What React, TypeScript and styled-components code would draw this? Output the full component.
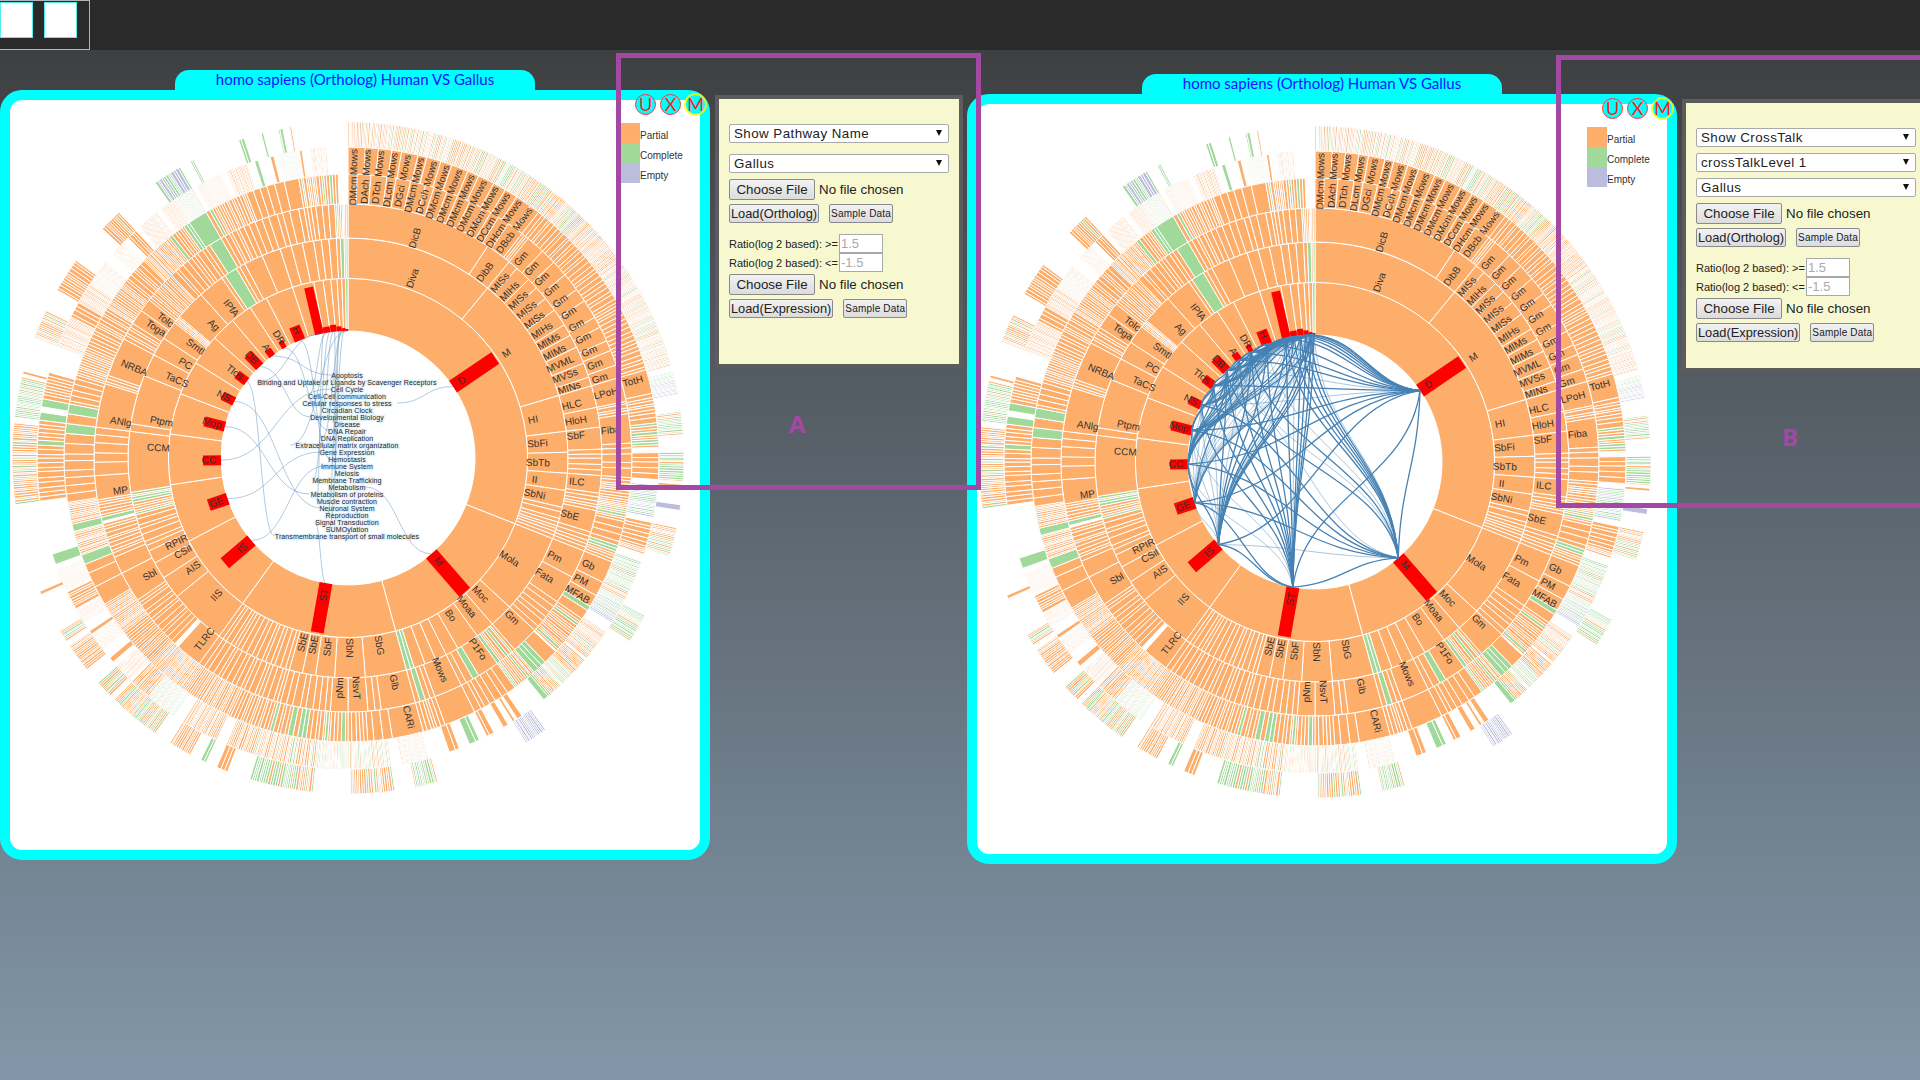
import styled, { createGlobalStyle } from "styled-components";

// ---------- sunburst data ----------
const ORANGE = "#fdae6b";
const GREEN = "#a1d99b";
const PURPLE = "#bcbddc";

const R = 127;
const ringR = (level: number) => R * Math.sqrt(level);

type Zone = [number, number, number, string?];

// seeded random so both charts and every render are the same
let seed = 20240;
function rnd() {
  seed = (seed * 16807) % 2147483647;
  return seed / 2147483647;
}

function polar(r: number, deg: number): [number, number] {
  const a = (deg * Math.PI) / 180;
  return [r * Math.sin(a), -r * Math.cos(a)];
}

function arcPath(r0: number, r1: number, a0: number, a1: number) {
  const [x0, y0] = polar(r1, a0);
  const [x1, y1] = polar(r1, a1);
  const [x2, y2] = polar(r0, a1);
  const [x3, y3] = polar(r0, a0);
  const big = a1 - a0 > 180 ? 1 : 0;
  return `M${x0.toFixed(2)} ${y0.toFixed(2)}A${r1.toFixed(1)} ${r1.toFixed(1)} 0 ${big} 1 ${x1.toFixed(2)} ${y1.toFixed(2)}L${x2.toFixed(2)} ${y2.toFixed(2)}A${r0.toFixed(1)} ${r0.toFixed(1)} 0 ${big} 0 ${x3.toFixed(2)} ${y3.toFixed(2)}Z`;
}

function pick(mix: string) {
  const v = rnd();
  if (mix === "o") return ORANGE;
  if (mix === "g") return GREEN;
  if (mix === "p") return PURPLE;
  if (mix === "og") return v < 0.72 ? ORANGE : GREEN;
  if (mix === "go") return v < 0.7 ? GREEN : ORANGE;
  if (mix === "pg") return v < 0.5 ? PURPLE : GREEN;
  return v < 0.6 ? ORANGE : v < 0.92 ? GREEN : PURPLE;
}

const rings: Zone[][] = [
  // ring 1 (127 - 180)
  [
    [0, 111.5, 1], [111.5, 164.6, 1], [164.6, 215.9, 1], [215.9, 242.4, 1], [242.4, 261.4, 1],
    [261.4, 277.7, 1], [277.7, 291, 1], [291, 302, 1], [302, 312, 1], [312, 320, 1], [320, 327, 1],
    [327, 333, 1], [333, 342, 1], [342, 349, 1], [349, 352, 1], [352, 354.5, 1], [354.5, 356.5, 1],
    [356.5, 358, 1], [358, 359.2, 1], [359.2, 360, 1, "g"],
  ],
  // ring 2 (180 - 220)
  [
    [0, 39.4, 1], [39.4, 73.5, 1], [73.5, 83, 1], [83, 88.5, 1], [88.5, 94, 1], [94, 98.5, 1], [98.5, 103, 1], [103, 107, 3], [107, 111.5, 5],
    [111.5, 132.7, 1], [132.7, 139, 1], [139, 144, 1], [144, 150, 1], [150, 153.5, 1], [153.5, 156.5, 1],
    [156.5, 159.5, 1], [159.5, 162.5, 1], [162.5, 164.6, 2, "g"],
    [164.6, 175.5, 1], [175.5, 183.5, 1], [183.5, 188.5, 1], [188.5, 192, 1], [192, 195.5, 1], [195.5, 215.9, 16],
    [215.9, 231, 1], [231, 237, 1], [237, 241.5, 1], [241.5, 245, 1], [245, 255, 7], [255, 261, 9, "og"],
    [261, 277, 1], [277, 279, 1], [279, 292, 1], [292, 298, 1], [298, 303, 1], [303, 308, 1], [308, 310, 5], [310, 318, 1], [318, 325, 1],
    [325, 326, 1], [326, 329.5, 1, "g"], [329.5, 332, 2], [332, 337, 1], [337, 342, 1], [342, 345, 1], [345, 348, 1], [348, 351, 1], [351, 353, 1], [353, 355, 1],
    [355, 357, 1], [357, 358, 1], [358, 359, 1, "g"], [359, 360, 2, "og"],
  ],
  // ring 3 (220 - 253)
  [
    [0, 33.4, 1], [33.4, 39.4, 1], [39.4, 73.5, 11], [73.5, 78.5, 1], [78.5, 83, 1], [83, 88, 1], [88, 94, 5],
    [94, 98, 1], [98, 102, 5], [102, 107, 1], [107, 111.5, 5], [111.5, 118, 1], [118, 124.5, 1], [124.5, 132.7, 6],
    [132.7, 139, 1], [139, 144, 8, "og"], [144, 149, 1], [149, 150.5, 1, "g"], [150.5, 153.5, 2], [153.5, 160, 1],
    [160, 164.6, 4, "og"], [164.6, 172.5, 1], [172.5, 175.5, 2], [175.5, 180, 1], [180, 184, 1], [184, 188, 3],
    [188, 195.5, 5], [195.5, 215.9, 18], [215.9, 222, 1], [223, 236, 12], [236, 243, 1], [243, 247, 1], [247, 255, 10, "o"],
    [255.5, 256.5, 1, "g"], [256.5, 260.5, 6], [260.5, 266, 1], [266, 277, 5], [277, 287, 1], [287, 289, 3], [289, 298, 1], [298, 302, 5],
    [302, 305.5, 1], [305.5, 308.5, 1], [308.5, 316, 14], [316, 325, 8], [325, 327, 2], [327, 330, 1, "g"], [330, 331, 1],
    [331, 337, 6], [337, 350, 8], [350, 357, 6], [357, 360, 8, "og"],
  ],
  // ring 4 (253 - 283)
  [
    [0, 37.8, 15], [37.8, 39.4, 3], [39.4, 73.5, 11], [73.5, 78.5, 1], [78.5, 81, 4], [81, 87, 1], [87, 94, 5],
    [94, 98, 7], [98, 103, 11, "og"], [103, 108, 4], [108, 111.5, 6, "og"], [111.5, 116, 1], [116, 119, 1], [119, 121.5, 1],
    [121.5, 122.5, 1, "g"], [122.5, 124.5, 1], [124.5, 132.7, 16, "og"], [133, 136, 1], [136, 139, 3, "g"],
    [139, 144, 12, "og"], [144, 150, 4], [150, 153.5, 3], [153.5, 160, 1], [160, 164.6, 6, "og"],
    [164.6, 171, 1], [171, 176, 3], [176, 180, 5, "og"], [180, 186, 9, "og"], [186, 196, 12, "og"], [196, 206, 16], [206, 216, 24],
    [216, 224, 26], [224, 232, 16], [232, 239, 20], [239, 243, 1], [243, 248, 2], [248, 250, 1, "g"], [250, 255, 14],
    [255, 256.5, 1, "g"], [256.5, 261, 12], [261, 266, 3], [266, 275, 5], [275, 277, 1, "g"], [277, 279, 1], [279, 281, 1, "g"],
    [281, 287, 6], [287, 293, 12], [293, 302, 13], [302, 308, 14], [308, 314, 8], [314, 321, 20], [321, 326, 8, "og"], [326, 330, 1, "g"],
    [330, 332, 3, "og"], [332, 339, 13], [339, 345, 4], [345, 347, 1], [347, 350, 1], [350, 358, 16, "og"],
  ],
  // ring 5 (283 - 310), mostly gaps and fine slices on the left side
  [
    [0, 37.8, 15], [37.8, 73.5, 46], [73.5, 78, 1], [78, 81, 5], [81, 83.5, 3], [83.5, 84, 1, "g"], [84, 88, 8, "og"], [89, 94, 5], [95, 101, 20, "pg"],
    [102, 106.5, 6], [106.5, 108, 4], [109.5, 118, 34, "go"], [118, 122, 16, "pg"], [124, 127, 14], [127, 130, 12, "og"],
    [130.5, 134, 12], [134, 137, 16, "go"], [137, 140, 10, "og"], [140, 141, 1, "g"], [146, 147, 1], [147.5, 148, 1, "o"], [149, 150, 1], [152, 153.5, 2], [155, 157, 2, "g"],
    [159, 161, 2], [165, 170, 14, "og"], [172, 180, 16, "og"], [180, 186, 14, "og"], [186, 198, 18, "og"], [198, 203, 7],
    [205, 212, 12], [214, 220, 18, "go"], [220, 224, 6], [224.5, 228, 12], [229, 230, 1], [232, 235, 12], [235.5, 236.2, 1], [238, 241, 10],
    [241, 244.5, 3], [245, 249, 14], [250, 252, 1, "go"], [262, 270, 9], [270, 277, 9, "og"], [277, 278.5, 1, "g"], [279.5, 281, 1, "g"], [281, 286, 8],
    [291, 297, 12], [297, 300, 2], [300, 304, 8], [304, 309, 18, "og"], [311, 314, 12], [315, 317, 2], [318, 322, 12], [323, 326, 8], [326, 330, 12, "go"],
    [331, 336, 16], [337, 341, 8], [342.5, 343.2, 1, "g"], [345.5, 346.2, 1], [347, 351, 14, "go"], [351, 351.5, 1], [353, 356, 8],
  ],
  // ring 6 (310 - 336), only the pale fine slices
  [
    [0, 46, 190, "og"], [46, 52, 30, "o"], [52, 60, 40, "og"], [60, 66, 32, "og"], [66, 74, 40, "og"], [75, 79, 20, "pg"],
    [82, 86, 14, "go"], [89, 94, 14, "go"], [94.5, 95, 1, "o"], [98, 99, 1, "p"], [102, 107, 18, "og"], [118, 123, 20, "go"], [144, 148, 14, "p"],
    [164.5, 168.5, 13, "go"], [172, 179.5, 22, "og"], [186, 197, 30, "go"], [201, 203, 3, "o"], [205, 206, 2, "g"], [208, 212, 12, "o"],
    [215, 224, 34, "og"], [225, 228, 10, "og"], [231, 236, 16, "o"], [237, 239, 7, "go"], [246, 246.6, 1, "o"], [262, 276, 40, "og"], [277, 284, 24, "go"],
    [284.5, 285, 1, "o"], [291, 296, 18, "og"], [300, 306, 12, "o"], [313, 317, 10, "og"], [325, 330, 12, "pg"], [332, 332.6, 2, "g"], [341, 342, 2, "g"],
    [345, 345.4, 1, "g"], [348, 348.8, 2, "g"], [350, 350.3, 1, "o"],
  ],
];

// ring 5 on the left side is much finer than the table counts, outside the solid block at 262-287
function sliceCount(ring: number, a0: number, n: number) {
  if (ring === 4 && a0 >= 160 && n >= 2 && (a0 < 262 || a0 > 287)) return Math.round(n * 2.2);
  return n;
}

interface Slice {
  d: string;
  fill: string;
}

const slices: Slice[] = [];
rings.forEach((zones, i) => {
  const r0 = ringR(i + 1);
  const r1 = ringR(i + 2);
  zones.forEach(([a0, a1, count, mix = "o"]) => {
    const n = sliceCount(i, a0, count);
    const weights = Array.from({ length: n }, () => (n > 1 ? 0.65 + rnd() * 0.7 : 1));
    const sum = weights.reduce((s, w) => s + w, 0);
    let a = a0;
    weights.forEach((w) => {
      const next = a + ((a1 - a0) * w) / sum;
      slices.push({ d: arcPath(r0, r1, a, next), fill: pick(mix) });
      a = next;
    });
  });
});

// text, clockwise angle from the top, radius of the text centre
const dmcm = ["DMcm", "DAch", "DTch", "DLcm", "DGci", "DMcm", "DCch", "DMcm", "DMcm", "DMcm", "DMcm", "DMcm", "DCcm", "DHcm", "DBcb"];
const mis = ["MISs", "MIHs", "MISs", "MISs", "MISs", "MIHs", "MIMs", "MIMs", "MVML", "MVSs", "MINs"];

const labels: [string, number, number][] = [
  ["Diva", 19.8, 191], ["M", 56.6, 190], ["HI", 78.4, 189], ["SbFi", 85.7, 190], ["SbTb", 91.5, 190], ["II", 96.7, 188],
  ["SbNi", 101, 190], ["Mola", 122, 190], ["Moc", 135.9, 190], ["Moaa", 141.5, 190], ["Bo", 147, 188], ["SbG", 170.6, 190],
  ["SbN", 179.6, 190], ["SbF", 186, 190], ["SbE", 190.4, 190], ["SbE", 193.7, 190], ["IIS", 223.7, 190], ["AIS", 234.6, 190],
  ["CSil", 240.3, 190], ["RPIR", 243.8, 191], ["CCM", 273, 190], ["Ptpm", 281, 190], ["TaCS", 294.4, 188], ["PC", 300, 188],
  ["Smtl", 306, 189], ["Ag", 314.6, 189], ["IPfA", 322, 190],
  ["DicB", 17, 230], ["DibB", 36.5, 231], ["HLC", 76.7, 230], ["HloH", 80.8, 231], ["SbF", 84.5, 229], ["ILC", 96, 230],
  ["SbE", 104.5, 229], ["Pm", 115.6, 229], ["Fata", 121, 229], ["Gm", 134.3, 229], ["P1Fo", 145.9, 231], ["Mows", 156.6, 231],
  ["Glb", 168.4, 229], ["NsvT", 178, 230], ["pNm", 182, 230], ["TLRC", 218.3, 231], ["Sbl", 239.4, 230], ["MP", 261.8, 230],
  ["ANlg", 279, 230], ["NRBA", 292.8, 232], ["Toga", 304, 232], ["Tolc", 307, 229],
  ["LPoH", 76, 266], ["Fiba", 84, 264], ["Gb", 114, 263], ["PM", 117.7, 263], ["MFAB", 120.8, 267], ["CARi", 166.9, 266], ["TotH", 75, 295],
  ...dmcm.map((t, i): [string, number, number] => [t, 1.2 + i * 2.5, 267]),
  ...dmcm.map((_, i): [string, number, number] => ["Mows", 1.2 + i * 2.5, 296]),
  ...mis.map((t, i): [string, number, number] => [t, 41 + i * 3.15, 232]),
  ...mis.map((_, i): [string, number, number] => ["Gm", 41 + i * 3.15, 264]),
];

interface ChartNode {
  name: string;
  angle: number;
  len: number;
  thick: number;
}

const nodes: ChartNode[] = [
  { name: "D", angle: 55.8, len: 51, thick: 14 },
  { name: "M", angle: 139, len: 51, thick: 14 },
  { name: "ST", angle: 190, len: 50, thick: 13 },
  { name: "IS", angle: 229.5, len: 35, thick: 13 },
  { name: "GE", angle: 251.3, len: 20, thick: 12 },
  { name: "CC", angle: 269, len: 18, thick: 10 },
  { name: "Mop", angle: 284.3, len: 21, thick: 10 },
  { name: "NS", angle: 296.4, len: 13, thick: 9 },
  { name: "Tlos", angle: 307, len: 12, thick: 9 },
  { name: "DB", angle: 316, len: 17, thick: 10 },
  { name: "A", angle: 323.4, len: 8, thick: 7 },
  { name: "DR", angle: 330, len: 8, thick: 5 },
  { name: "H", angle: 337.8, len: 15, thick: 11 },
  { name: "", angle: 347, len: 48, thick: 9 },
  { name: "", angle: 350.5, len: 6, thick: 7 },
  { name: "", angle: 353.5, len: 7, thick: 6 },
  { name: "", angle: 356, len: 5, thick: 5 },
  { name: "", angle: 358, len: 3, thick: 4 },
  { name: "", angle: 359.5, len: 2, thick: 3 },
];

const pathways: [string, number][] = [
  ["Apoptosis", 323.4], ["Binding and Uptake of Ligands by Scavenger Receptors", 347], ["Cell Cycle", 269], ["Cell-Cell communication", 350.5],
  ["Cellular responses to stress", 55.8], ["Circadian Clock", 353.5], ["Developmental Biology", 316], ["Disease", 356], ["DNA Repair", 330],
  ["DNA Replication", 358], ["Extracellular matrix organization", 359.5], ["Gene Expression", 251.3], ["Hemostasis", 337.8], ["Immune System", 229.5],
  ["Meiosis", 354], ["Membrane Trafficking", 352], ["Metabolism", 139], ["Metabolism of proteins", 284.3], ["Muscle contraction", 349],
  ["Neuronal System", 296.4], ["Reproduction", 357], ["Signal Transduction", 190], ["SUMOylation", 358.5], ["Transmembrane transport of small molecules", 307],
];

const LIST_TOP = -82;
const LIST_STEP = 7;

const pathwayLinks = pathways.map(([name, angle], i) => {
  const [x0, y0] = polar(R, angle);
  const half = name.length * 1.75;
  const x1 = angle === 55.8 || angle === 139 ? half : -half;
  const y1 = LIST_TOP + i * LIST_STEP - 1;
  const mx = (x0 + x1) / 2;
  return `M${x0.toFixed(1)} ${y0.toFixed(1)}C${mx.toFixed(1)} ${y0.toFixed(1)} ${mx.toFixed(1)} ${y1.toFixed(1)} ${x1.toFixed(1)} ${y1.toFixed(1)}`;
});

// curve between two nodes, between a straight line and an S along its long axis
function crossCurve(a: number, b: number) {
  const [x0, y0] = polar(R, a);
  const [x1, y1] = polar(R, b);
  const mx = (x0 + x1) / 2;
  const my = (y0 + y1) / 2;
  const vertical = Math.abs(y1 - y0) > Math.abs(x1 - x0);
  const s0 = vertical ? [x0, my] : [mx, y0];
  const s1 = vertical ? [x1, my] : [mx, y1];
  const t0 = [x0 + (x1 - x0) / 3, y0 + (y1 - y0) / 3];
  const t1 = [x0 + ((x1 - x0) * 2) / 3, y0 + ((y1 - y0) * 2) / 3];
  const k = 0.72;
  const c0 = [s0[0] * k + t0[0] * (1 - k), s0[1] * k + t0[1] * (1 - k)];
  const c1 = [s1[0] * k + t1[0] * (1 - k), s1[1] * k + t1[1] * (1 - k)];
  return `M${x0.toFixed(1)} ${y0.toFixed(1)}C${c0[0].toFixed(1)} ${c0[1].toFixed(1)} ${c1[0].toFixed(1)} ${c1[1].toFixed(1)} ${x1.toFixed(1)} ${y1.toFixed(1)}`;
}

const crossLinks: { d: string; strong: boolean }[] = [];
nodes.forEach((a, i) => {
  nodes.slice(i + 1).forEach((b) => {
    crossLinks.push({ d: crossCurve(a.angle, b.angle), strong: rnd() < (i < 3 ? 0.8 : 0.5) });
  });
});

function labelTransform(angle: number, r: number) {
  const [x, y] = polar(r, angle);
  const rot = angle < 180 ? angle - 90 : angle + 90;
  return `translate(${x.toFixed(1)} ${y.toFixed(1)}) rotate(${rot.toFixed(1)})`;
}

function Sunburst({ mode }: { mode: "pathway" | "crosstalk" }) {
  return (
    <ChartSvg width={690} height={750}>
      <g transform="translate(338 358)">
        {slices.map((s, i) => (
          <path key={i} d={s.d} fill={s.fill} stroke="#fff" strokeWidth={1} />
        ))}
        {labels.map(([t, a, r], i) => (
          <WedgeText key={i} transform={labelTransform(a, r)} textAnchor="middle" dy="3">
            {t}
          </WedgeText>
        ))}
        {nodes.map((n) => (
          <g key={n.angle} transform={`rotate(${n.angle - 90})`}>
            <rect x={R} y={-n.thick / 2} width={n.len} height={n.thick} fill="#f00" />
          </g>
        ))}
        {nodes.map((n) =>
          n.name ? (
            <WedgeText key={n.angle} transform={labelTransform(n.angle, R + 9 + n.name.length * 1.5)} textAnchor="middle" dy="3">
              {n.name}
            </WedgeText>
          ) : null
        )}
        {mode === "pathway" && (
          <>
            {pathways.map(([name], i) => (
              <PathwayText key={name} x={-1} y={LIST_TOP + i * LIST_STEP + 2} textAnchor="middle">
                {name}
              </PathwayText>
            ))}
            {pathwayLinks.map((d, i) => (
              <path key={i} d={d} fill="none" stroke="#4682b4" strokeOpacity={0.42} strokeWidth={1} />
            ))}
          </>
        )}
        {mode === "crosstalk" &&
          crossLinks.map((l, i) => (
            <path
              key={i}
              d={l.d}
              fill="none"
              stroke="#4682b4"
              strokeOpacity={l.strong ? 1 : 0.45}
              strokeWidth={l.strong ? 1.3 : 1}
            />
          ))}
      </g>
    </ChartSvg>
  );
}

// ---------- page ----------
function Ratio({ sign, value }: { sign: string; value: string }) {
  return (
    <RatioRow>
      <RatioLabel>Ratio(log 2 based): {sign}</RatioLabel>
      <RatioInput value={value} readOnly />
    </RatioRow>
  );
}

function Workspace({ mode, selects, offset }: { mode: "pathway" | "crosstalk"; selects: string[]; offset: number }) {
  return (
    <Space $offset={offset}>
      <ChartWindow>
        <Tab>homo sapiens (Ortholog) Human VS Gallus</Tab>
        <Frame>
          <WindowButtons>
            <RoundButton>U</RoundButton>
            <RoundButton>X</RoundButton>
            <RoundButton $active>M</RoundButton>
          </WindowButtons>
          <Legend>
            <LegendRow>
              <Swatch $color={ORANGE} />
              <LegendText>Partial</LegendText>
            </LegendRow>
            <LegendRow>
              <Swatch $color={GREEN} />
              <LegendText>Complete</LegendText>
            </LegendRow>
            <LegendRow>
              <Swatch $color={PURPLE} />
              <LegendText>Empty</LegendText>
            </LegendRow>
          </Legend>
          <Sunburst mode={mode} />
        </Frame>
      </ChartWindow>
      <Controls>
        <SelectStack $gap={selects.length > 2 ? 6 : 11}>
          {selects.map((s) => (
            <SelectBox key={s}>
              <Select defaultValue={s}>
                <option>{s}</option>
              </Select>
            </SelectBox>
          ))}
        </SelectStack>
        <FileInput />
        <ButtonRow>
          <LoadButton>Load(Ortholog)</LoadButton>
          <SampleButton>Sample Data</SampleButton>
        </ButtonRow>
        <RatioBlock>
          <Ratio sign=">=" value="1.5" />
          <Ratio sign="<=" value="-1.5" />
        </RatioBlock>
        <FileInput />
        <ButtonRow>
          <LoadButton>Load(Expression)</LoadButton>
          <SampleButton>Sample Data</SampleButton>
        </ButtonRow>
      </Controls>
    </Space>
  );
}

export default function App() {
  return (
    <>
      <GlobalStyle />
      <Page>
        <TopBar>
          <Thumbs>
            <Thumb />
            <Thumb />
          </Thumbs>
        </TopBar>
        <Stage>
          <Workspace mode="pathway" selects={["Show Pathway Name", "Gallus"]} offset={0} />
          <Workspace mode="crosstalk" selects={["Show CrossTalk", "crossTalkLevel 1", "Gallus"]} offset={4} />
        </Stage>
        <MarkBoxA />
        <MarkBoxB />
        <MarkA>A</MarkA>
        <MarkB>B</MarkB>
      </Page>
    </>
  );
}

const GlobalStyle = createGlobalStyle`
  html, body {
    margin: 0;
    padding: 0;
    overflow: hidden;
  }
  body {
    font-family: "Liberation Sans", Arial, sans-serif;
  }
`;

const Page = styled.div`
  position: relative;
  width: 1920px;
  height: 1080px;
  overflow: hidden;
  background: linear-gradient(#3e3f41 0, #3e3f41 50px, #8297a9 1080px);
`;

const TopBar = styled.div`
  height: 50px;
  background: #2a2a2a;
`;

const Thumbs = styled.div`
  box-sizing: border-box;
  width: 90px;
  height: 50px;
  padding-top: 1px;
  display: flex;
  gap: 11px;
  border: 1px solid #b5b5b5;
  border-left: none;
`;

const Thumb = styled.div`
  box-sizing: border-box;
  width: 33px;
  height: 36px;
  background: #fff;
  border: 1px solid #5ee;
`;

const Stage = styled.div`
  display: flex;
  align-items: flex-start;
  padding-top: 20px;
`;

const Space = styled.div<{ $offset: number }>`
  flex: none;
  width: 967px;
  margin-top: ${(p) => p.$offset}px;
  display: flex;
  align-items: flex-start;
`;

const ChartWindow = styled.div`
  flex: none;
  width: 710px;
`;

const Tab = styled.div`
  width: 360px;
  height: 20px;
  margin: 0 auto;
  background: #0ff;
  border-radius: 14px 14px 0 0;
  color: #1414ff;
  font: 15px/19px Lato, "Liberation Sans", sans-serif;
  text-align: center;
`;

const Frame = styled.div`
  position: relative;
  box-sizing: border-box;
  width: 710px;
  height: 770px;
  background: #fff;
  border: 10px solid #0ff;
  border-radius: 22px;
`;

const ChartSvg = styled.svg`
  display: block;
`;

const WedgeText = styled.text`
  font: 10px "Liberation Sans", Arial, sans-serif;
  fill: #333;
`;

const PathwayText = styled.text`
  font: 7px "Liberation Sans", Arial, sans-serif;
  letter-spacing: 0.1px;
  fill: #222;
  stroke: #e6f2fa;
  stroke-width: 2.5px;
  paint-order: stroke;
`;

const WindowButtons = styled.div`
  position: absolute;
  top: -6px;
  right: -6px;
  display: flex;
  gap: 4px;
`;

const RoundButton = styled.div<{ $active?: boolean }>`
  box-sizing: border-box;
  width: 21px;
  height: 21px;
  border-radius: 50%;
  background: #0ff;
  border: 1px solid ${(p) => (p.$active ? "#ff0" : "#f33")};
  outline: ${(p) => (p.$active ? "1px solid #ff0" : "none")};
  color: #f22;
  font: 18px/19px Lato, "Liberation Sans", sans-serif;
  text-align: center;
`;

const Legend = styled.div`
  position: absolute;
  top: 23px;
  left: 610px;
`;

const LegendRow = styled.div`
  display: flex;
  align-items: center;
  height: 20px;
`;

const LegendText = styled.span`
  margin-top: 4px;
  font-size: 10px;
  color: #333;
`;

const Swatch = styled.span<{ $color: string }>`
  width: 20px;
  height: 20px;
  background: ${(p) => p.$color};
`;

const Controls = styled.div`
  flex: none;
  box-sizing: border-box;
  width: 248px;
  height: 273px;
  margin: 25px 0 0 5px;
  padding: 25px 0 0 10px;
  background: #f7f8d0;
  border: 4px solid #5c5c5c;
`;

const SelectStack = styled.div<{ $gap: number }>`
  display: flex;
  flex-direction: column;
  gap: ${(p) => p.$gap}px;
  margin-bottom: 6px;
`;

const SelectBox = styled.div`
  position: relative;
  width: 220px;

  &::after {
    content: "";
    position: absolute;
    top: 6px;
    right: 7px;
    border-left: 3px solid transparent;
    border-right: 3px solid transparent;
    border-top: 6px solid #111;
    pointer-events: none;
  }
`;

const Select = styled.select`
  display: block;
  appearance: none;
  box-sizing: border-box;
  width: 100%;
  height: 19px;
  padding: 0 4px;
  background: #fff;
  border: 1px solid #a9a9a9;
  border-radius: 2px;
  color: #222;
  font: 13.33px "Liberation Sans", Arial, sans-serif;
  letter-spacing: 0.45px;
`;

const FileInput = styled.input.attrs({ type: "file" })`
  display: block;
  width: 220px;
  height: 21px;
  color: #222;
  font: 13.33px "Liberation Sans", Arial, sans-serif;

  &::file-selector-button {
    box-sizing: border-box;
    width: 86px;
    height: 21px;
    margin-right: 4px;
    padding: 0;
    border: 1px solid #8a8a8a;
    border-radius: 2px;
    background: linear-gradient(#f2f2f2, #dcdcdc);
    color: #222;
    font: 13.33px "Liberation Sans", Arial, sans-serif;
  }
`;

const ButtonRow = styled.div`
  display: flex;
  gap: 10px;
  margin-top: 4px;
`;

const LoadButton = styled.button`
  box-sizing: border-box;
  height: 19px;
  padding: 0 1px;
  border: 1px solid #8a8a8a;
  border-radius: 2px;
  background: linear-gradient(#f2f2f2, #dcdcdc);
  color: #222;
  font: 12.8px/16px "Liberation Sans", Arial, sans-serif;
  white-space: nowrap;
`;

const SampleButton = styled.button`
  box-sizing: border-box;
  width: 64px;
  height: 19px;
  padding: 0;
  border: 1px solid #8a8a8a;
  border-radius: 2px;
  background: linear-gradient(#f2f2f2, #dcdcdc);
  color: #222;
  font: 10px/16px "Liberation Sans", Arial, sans-serif;
  letter-spacing: 0.2px;
`;

const RatioBlock = styled.div`
  margin: 11px 0 2px;
`;

const RatioRow = styled.div`
  display: flex;
  align-items: center;
  height: 19px;
`;

const RatioLabel = styled.span`
  width: 110px;
  color: #222;
  font-size: 11px;
  white-space: nowrap;
`;

const RatioInput = styled.input`
  box-sizing: border-box;
  width: 44px;
  height: 19px;
  padding: 0 1px;
  background: #fff;
  border: 1px solid #a9a9a9;
  color: #aaa;
  font: 13px "Liberation Sans", Arial, sans-serif;
`;

const MarkBoxA = styled.div`
  position: absolute;
  top: 53px;
  left: 616px;
  box-sizing: border-box;
  width: 365px;
  height: 437px;
  border: 5px solid #a349a4;
`;

const MarkBoxB = styled.div`
  position: absolute;
  top: 55px;
  left: 1556px;
  box-sizing: border-box;
  width: 420px;
  height: 453px;
  border: 5px solid #a349a4;
`;

const MarkA = styled.div`
  position: absolute;
  top: 410px;
  left: 789px;
  color: #a349a4;
  font: bold 24px/28px "Open Sans", sans-serif;
`;

const MarkB = styled.div`
  position: absolute;
  top: 423px;
  left: 1782px;
  color: #a349a4;
  font: bold 24px/28px "Open Sans", sans-serif;
`;
